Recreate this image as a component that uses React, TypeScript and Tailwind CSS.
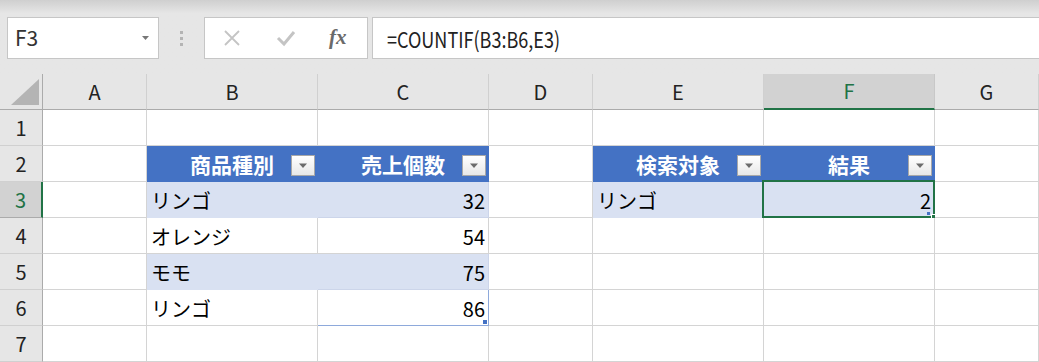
import React from "react";

const FONT = { fontFamily: '"Noto Sans CJK JP", "Noto Sans", sans-serif' };

const cols = ["A", "B", "C", "D", "E", "F", "G"];

type CellDef = {
  text?: string;
  kind?: "head" | "band" | "plain";
  align?: "left" | "right";
  r?: string; // right border colour class
  b?: string; // bottom border colour class
  filter?: boolean;
  selected?: boolean;
  resize?: boolean;
};

const GRID = "border-[#d4d4d4]";
const BLUE = "border-[#8ea9db]";
const HEAD = "border-[#4472c4]";
const BAND = "border-[#d9e1f2]";

const rows: CellDef[][] = [
  [{}, {}, {}, {}, {}, {}, {}],
  [
    { r: HEAD },
    { text: "商品種別", kind: "head", filter: true, r: HEAD, b: HEAD },
    { text: "売上個数", kind: "head", filter: true, r: HEAD, b: HEAD },
    { r: HEAD },
    { text: "検索対象", kind: "head", filter: true, r: HEAD, b: HEAD },
    { text: "結果", kind: "head", filter: true, r: HEAD, b: HEAD },
    {},
  ],
  [
    { r: BLUE },
    { text: "リンゴ", kind: "band", r: BAND, b: "border-[#ccd5ea]" },
    { text: "32", kind: "band", align: "right", r: BLUE, b: "border-[#ccd5ea]" },
    { r: BLUE },
    { text: "リンゴ", kind: "band", r: BAND, b: BLUE },
    { text: "2", kind: "band", align: "right", r: BLUE, b: BLUE, selected: true },
    {},
  ],
  [
    { r: BLUE },
    { text: "オレンジ" },
    { text: "54", align: "right", r: BLUE },
    {},
    {},
    {},
    {},
  ],
  [
    { r: BLUE },
    { text: "モモ", kind: "band", r: BAND, b: "border-[#ccd5ea]" },
    { text: "75", kind: "band", align: "right", r: BLUE, b: "border-[#ccd5ea]" },
    {},
    {},
    {},
    {},
  ],
  [
    { r: BLUE },
    { text: "リンゴ", b: BLUE },
    { text: "86", align: "right", r: BLUE, b: BLUE, resize: true },
    {},
    {},
    {},
    {},
  ],
  [{}, {}, {}, {}, {}, {}, {}],
];

function FilterButton() {
  return (
    <div className="absolute right-[2px] top-[9px] flex h-[21px] w-[24px] items-center justify-center border border-[#a8a8a8] bg-gradient-to-b from-white to-[#e8e8e8]">
      <svg width="10" height="6" viewBox="0 0 10 6">
        <polygon points="1,0.5 9,0.5 5,5" fill="#6b6b6b" />
      </svg>
    </div>
  );
}

function Cell({ c }: { c: CellDef }) {
  const bg =
    c.kind === "head"
      ? "bg-[#4472c4] text-white font-bold text-[21px]"
      : c.kind === "band"
        ? "bg-[#d9e1f2] text-black text-[20px]"
        : "bg-white text-black text-[20px]";
  return (
    <div
      className={`relative flex h-9 items-center border-r border-b pt-0.5 ${bg} ${c.r ?? GRID} ${c.b ?? GRID} ${
        c.kind === "head" ? "justify-center" : c.align === "right" ? "justify-end pr-[3px]" : "justify-start pl-[4px]"
      }`}
    >
      <span className="leading-none">{c.text}</span>
      {c.filter && <FilterButton />}
      {c.selected && (
        <>
          <div className="pointer-events-none absolute -top-[2px] -left-[2px] -right-[1px] -bottom-[1px] border-2 border-[#217346]" />
          <div className="absolute -bottom-[4px] -right-[4px] h-[7px] w-[7px] border border-white bg-[#217346]" />
          <div className="absolute bottom-[2px] right-[4px] h-[3px] w-[3px] bg-[#4472c4]" />
        </>
      )}
      {c.resize && <div className="absolute bottom-[1px] right-[1px] h-[4px] w-[4px] bg-[#4472c4]" />}
    </div>
  );
}

export default function App() {
  return (
    <div className="h-[362px] w-[1039px] overflow-hidden bg-[#e6e6e6]" style={FONT}>
      {/* formula bar */}
      <div className="h-[74px] bg-gradient-to-b from-[#cfcfcf] via-[#e6e6e6] via-[18%] to-[#e6e6e6] pt-[17px]">
        <div className="flex h-[42px] items-stretch">
          <div className="ml-[7px] flex w-[152px] items-center justify-between border border-[#c6c6c6] bg-white pl-[7px] pr-[9px]">
            <span className="text-[21px] text-[#333]">F3</span>
            <svg width="7" height="4" viewBox="0 0 7 4">
              <polygon points="0,0 7,0 3.5,4" fill="#777" />
            </svg>
          </div>
          <div className="flex w-[45px] flex-col items-center justify-center gap-[3px]">
            <div className="h-[3px] w-[3px] bg-[#b4b4b4]" />
            <div className="h-[3px] w-[3px] bg-[#b4b4b4]" />
            <div className="h-[3px] w-[3px] bg-[#b4b4b4]" />
          </div>
          <div className="flex w-[164px] items-center border border-[#c6c6c6] bg-white">
            <svg className="ml-[18px]" width="18" height="16" viewBox="0 0 18 16">
              <path d="M2 1 L16 15 M16 1 L2 15" stroke="#c4c4c4" strokeWidth="1.8" />
            </svg>
            <svg className="ml-[35px]" width="20" height="18" viewBox="0 0 20 18">
              <path d="M2 9 L8 15 L18 3" stroke="#c4c4c4" strokeWidth="3" fill="none" />
            </svg>
            <span
              className="ml-[33px] text-[21px] font-bold italic text-[#6a6a6a]"
              style={{ fontFamily: '"Liberation Serif", "DejaVu Serif", serif' }}
            >
              fx
            </span>
          </div>
          <div className="ml-[4px] flex flex-1 items-center border border-[#c6c6c6] border-r-0 bg-white pl-[14px]">
            <span className="inline-block origin-left scale-x-[0.82] text-[22px] text-[#222]">=COUNTIF(B3:B6,E3)</span>
          </div>
        </div>
      </div>

      {/* sheet */}
      <div className="grid grid-cols-[43px_104px_171px_171px_104px_171px_171px_1fr]">
        {/* column header row */}
        <div className="relative h-9 border-r border-b border-[#ababab] bg-[#e6e6e6]">
          <svg className="absolute left-[11px] top-[5px]" width="29" height="27" viewBox="0 0 29 27">
            <polygon points="28,0 28,26 0,26" fill="#b4b4b4" />
          </svg>
        </div>
        {cols.map((c) =>
          c === "F" ? (
            <div
              key={c}
              className="flex h-9 items-center justify-center border-r border-r-[#c8c8c8] border-b-2 border-b-[#217346] bg-[#d2d2d2] text-[20px] text-[#217346]"
            >
              {c}
            </div>
          ) : (
            <div
              key={c}
              className="flex h-9 items-center justify-center border-r border-b border-r-[#d0d0d0] border-b-[#ababab] bg-[#e6e6e6] text-[20px] text-[#222]"
            >
              {c}
            </div>
          )
        )}

        {rows.map((row, i) => (
          <React.Fragment key={i}>
            {i === 2 ? (
              <div className="flex h-9 items-center justify-center border-r-2 border-b border-r-[#217346] border-b-[#ababab] bg-[#d2d2d2] text-[20px] text-[#217346]">
                {i + 1}
              </div>
            ) : (
              <div className="flex h-9 items-center justify-center border-r border-b border-r-[#ababab] border-b-[#d0d0d0] bg-[#e6e6e6] text-[20px] text-[#222]">
                {i + 1}
              </div>
            )}
            {row.map((c, j) => (
              <Cell key={j} c={c} />
            ))}
          </React.Fragment>
        ))}
      </div>
    </div>
  );
}
